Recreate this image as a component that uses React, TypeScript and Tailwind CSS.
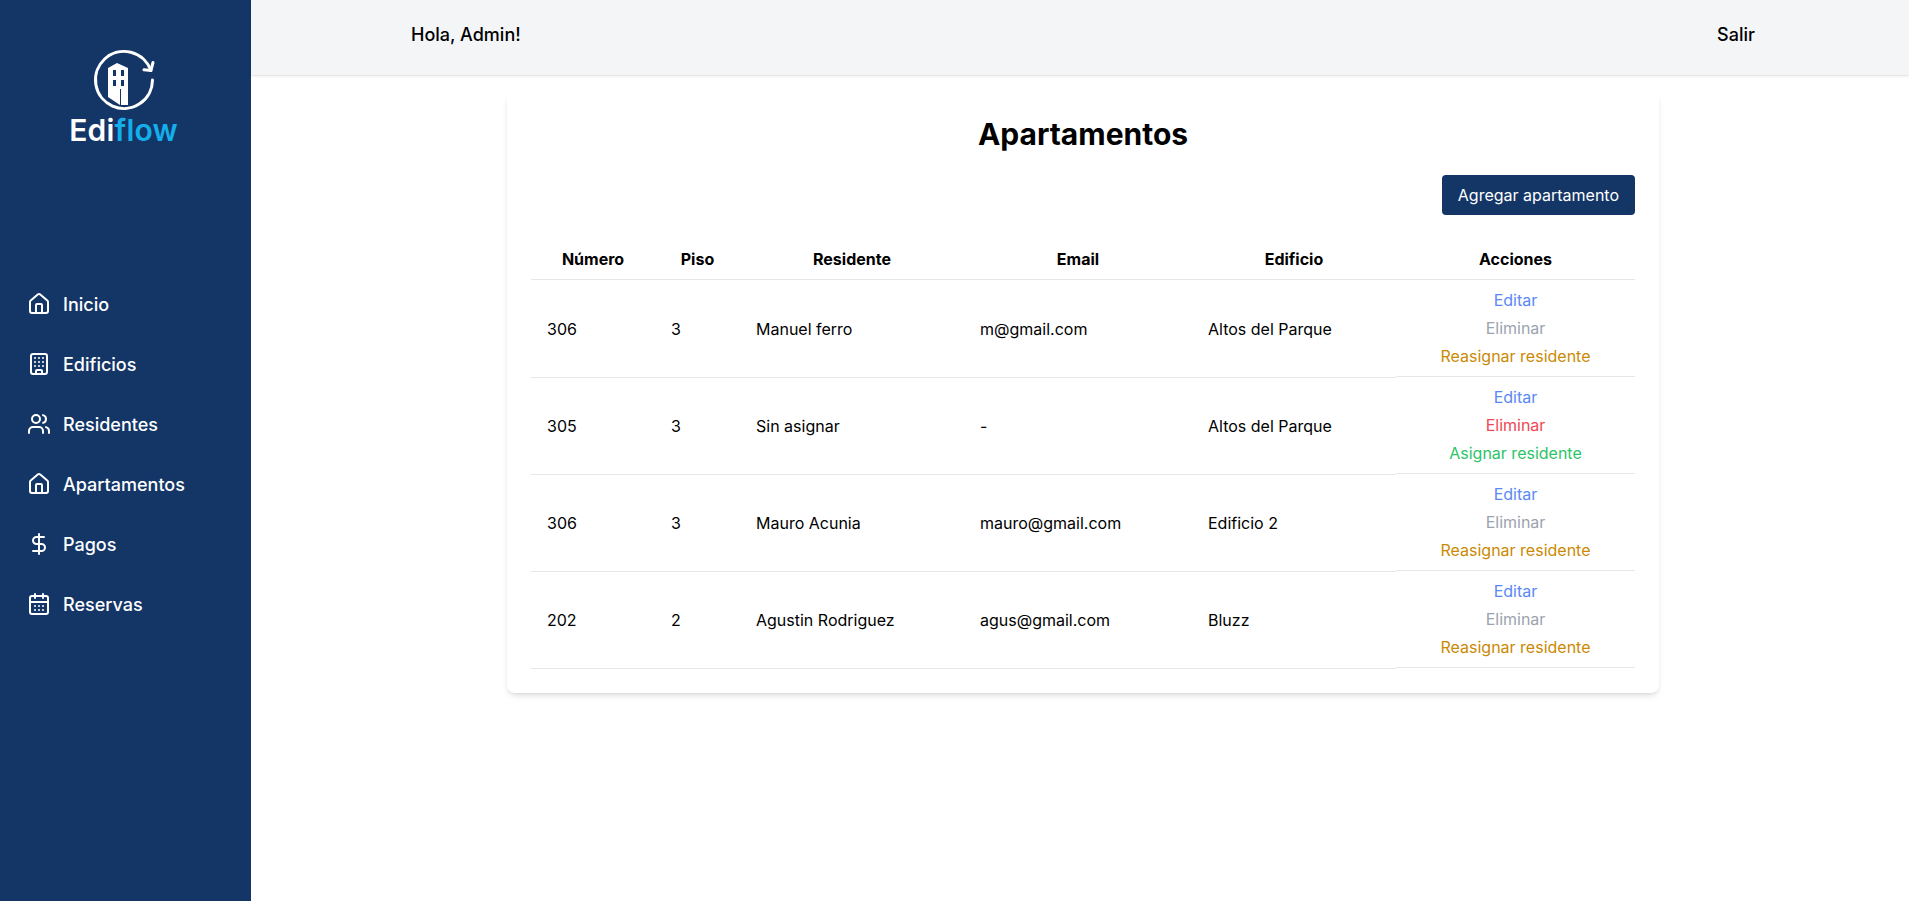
import { Building, CalendarDays, DollarSign, House, Users } from "lucide-react";

const nav = [
  { label: "Inicio", Icon: House },
  { label: "Edificios", Icon: Building },
  { label: "Residentes", Icon: Users },
  { label: "Apartamentos", Icon: House },
  { label: "Pagos", Icon: DollarSign },
  { label: "Reservas", Icon: CalendarDays },
];

const rows = [
  { n: "306", p: "3", r: "Manuel ferro", e: "m@gmail.com", b: "Altos del Parque", assigned: true },
  { n: "305", p: "3", r: "Sin asignar", e: "-", b: "Altos del Parque", assigned: false },
  { n: "306", p: "3", r: "Mauro Acunia", e: "mauro@gmail.com", b: "Edificio 2", assigned: true },
  { n: "202", p: "2", r: "Agustin Rodriguez", e: "agus@gmail.com", b: "Bluzz", assigned: true },
];

function Logo() {
  return (
    <div className="flex flex-col items-center pr-[4px]">
      <svg width="66" height="66" viewBox="90 47 66 66" fill="none">
        <path d="M151.5 80A28.5 28.5 0 1 1 149.9 70.5" stroke="#fff" strokeWidth="3" strokeLinecap="round" />
        <path d="M152 62.5L149.9 70.5L143 69.8" stroke="#fff" strokeWidth="3" strokeLinecap="round" strokeLinejoin="round" />
        <path
          fillRule="evenodd"
          fill="#fff"
          d="M107 68L116 63L127 68V105H119L107 97ZM112 70V76H115V70ZM120 70V76H123V70ZM112 80V86H115V80ZM120 80V86H123V80Z"
        />
        <path d="M119.5 89V105" stroke="#133667" strokeWidth="1" />
      </svg>
      <div className="-mt-[1px] text-[30px] leading-[36px] font-semibold tracking-[0.2px] font-['Inter',sans-serif]">
        <span className="text-white">Edi</span>
        <span className="text-[#14aeea]">flow</span>
      </div>
    </div>
  );
}

function Sidebar() {
  return (
    <aside className="w-[251px] shrink-0 min-h-[901px] bg-[#133667] text-white">
      <div className="pt-[47px] flex justify-center">
        <Logo />
      </div>
      <nav className="mt-[140px] flex flex-col gap-[28px] pl-[27px]">
        {nav.map(({ label, Icon }) => (
          <a key={label} className="flex items-center gap-[12px] h-[32px] text-[18px] font-[550]">
            <Icon size={24} strokeWidth={2} />
            {label}
          </a>
        ))}
      </nav>
    </aside>
  );
}

function Actions({ assigned }: { assigned: boolean }) {
  return (
    <div className="flex flex-col items-center gap-[4px] pt-[8px] pb-[8px] border-b border-[#e5e7eb] leading-[24px]">
      <span className="text-[#5a88f8]">Editar</span>
      <span className={assigned ? "text-[#9ca3af]" : "text-[#f04854]"}>Eliminar</span>
      <span className={assigned ? "text-[#ca8a04]" : "text-[#2cc468]"}>
        {assigned ? "Reasignar residente" : "Asignar residente"}
      </span>
    </div>
  );
}

const cell = "pl-[16px] shadow-[0_1px_0_#e5e7eb]";

export default function App() {
  return (
    <div className="flex min-h-[901px] bg-white text-black font-['Inter',sans-serif]">
      <Sidebar />
      <div className="flex-1 min-w-0">
        <header className="h-[75px] pb-[6px] bg-[#f4f5f7] shadow-sm flex items-center justify-between pl-[160px] pr-[154px] text-[18px] font-medium">
          <span>Hola, Admin!</span>
          <span>Salir</span>
        </header>
        <main className="pt-[17px] pl-[256px]">
          <section className="w-[1152px] bg-white rounded-lg shadow-md px-[24px] pt-[24px] pb-[25px]">
            <h1 className="text-center text-[30px] leading-[36px] font-bold">Apartamentos</h1>
            <div className="flex justify-end mt-[23px] mb-[24px]">
              <button className="h-[40px] px-[16px] rounded bg-[#133667] text-white text-[16px]">Agregar apartamento</button>
            </div>
            <table className="w-[1104px] table-fixed border-separate border-spacing-0 text-[16px]">
              <colgroup>
                <col className="w-[124px]" />
                <col className="w-[85px]" />
                <col className="w-[224px]" />
                <col className="w-[228px]" />
                <col className="w-[204px]" />
                <col className="w-[239px]" />
              </colgroup>
              <thead>
                <tr>
                  {["Número", "Piso", "Residente", "Email", "Edificio", "Acciones"].map((h) => (
                    <th key={h} className="h-[41px] font-bold text-center border-b border-[#e5e7eb]">{h}</th>
                  ))}
                </tr>
              </thead>
              <tbody>
                {rows.map((r, i) => (
                  <tr key={i}>
                    <td className={cell}>{r.n}</td>
                    <td className={cell}>{r.p}</td>
                    <td className={cell}>{r.r}</td>
                    <td className={cell}>{r.e}</td>
                    <td className={cell}>{r.b}</td>
                    <td className="p-0 align-top"><Actions assigned={r.assigned} /></td>
                  </tr>
                ))}
              </tbody>
            </table>
          </section>
        </main>
      </div>
    </div>
  );
}
